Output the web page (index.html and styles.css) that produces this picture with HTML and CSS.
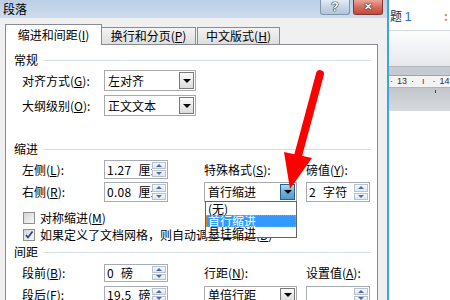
FILE: index.html
```html
<!DOCTYPE html>
<html lang="zh-CN">
<head>
  <meta charset="UTF-8"/>
  <title>段落</title>
  <link rel="stylesheet" href="styles.css">
</head>
<body>

  <div class="screen">
    <div class="dialog">
      <div class="titlebar">
        <span class="title">段落</span>
        <div class="caption-btns">
          <span class="cbtn help">?</span>
          <span class="cbtn close">✕</span>
        </div>
      </div>

      <div class="tabs">
        <div class="tab active">缩进和间距(<u>I</u>)</div>
        <div class="tab">换行和分页(<u>P</u>)</div>
        <div class="tab">中文版式(<u>H</u>)</div>
      </div>

      <div class="panel">
        <div class="group g1">常规</div>
        <div class="row r1">
          <span>对齐方式(<u>G</u>):</span>
          <div class="select wide"><span class="val">左对齐</span><span class="drop"><i></i></span></div>
        </div>
        <div class="row r2">
          <span>大纲级别(<u>O</u>):</span>
          <div class="select wide"><span class="val">正文文本</span><span class="drop"><i></i></span></div>
        </div>

        <div class="group g2">缩进</div>
        <div class="row r3">
          <span>左侧(<u>L</u>):</span>
          <div class="spin"><span class="val">1.27 厘米</span><span class="arrows"><b class="up"></b><b class="down"></b></span></div>
          <span>特殊格式(<u>S</u>):</span>
          <span>磅值(<u>Y</u>):</span>
        </div>
        <div class="row r4">
          <span>右侧(<u>R</u>):</span>
          <div class="spin"><span class="val">0.08 厘米</span><span class="arrows"><b class="up"></b><b class="down"></b></span></div>
          <div class="select mid"><span class="val">首行缩进</span><span class="drop hot"><i></i></span></div>
          <div class="spin"><span class="val">2 字符</span><span class="arrows"><b class="up"></b><b class="down"></b></span></div>
        </div>

        <label class="check c1"><span class="box"></span><span>对称缩进(<u>M</u>)</span></label>
        <label class="check c2"><span class="box">
          <svg viewBox="0 0 10 10"><path d="M2 5 L4 7.5 L8.5 1.5" fill="none" stroke="#2a3a8c" stroke-width="1.6"/></svg>
        </span><span>如果定义了文档网格，则自动调整右缩进(<u>D</u>)</span></label>

        <div class="group g3">间距</div>
        <div class="row r5">
          <span>段前(<u>B</u>):</span>
          <div class="spin"><span class="val">0 磅</span><span class="arrows"><b class="up"></b><b class="down"></b></span></div>
          <span>行距(<u>N</u>):</span>
          <span>设置值(<u>A</u>):</span>
        </div>
        <div class="row r6">
          <span>段后(<u>F</u>):</span>
          <div class="spin"><span class="val">19.5 磅</span><span class="arrows"><b class="up"></b><b class="down"></b></span></div>
          <div class="select mid"><span class="val">单倍行距</span><span class="drop"><i></i></span></div>
          <div class="spin"><span class="val"></span><span class="arrows"><b class="up"></b><b class="down"></b></span></div>
        </div>
      </div>
    </div>

    <div class="word">
      <div class="styles-row"><span class="style-name">题 <span class="num">1</span></span><span class="orange">:</span></div>
      <div class="ribbon-fade"></div>
      <div class="ribbon-band"></div>
      <div class="ruler">
        <span>·</span><span>13</span><span>·</span><span>ı</span><span>·</span><span>14</span><span>·</span>
      </div>
      <div class="ruler-below"><span class="tick"></span></div>
      <div class="page"></div>
    </div>
  </div>

  <!-- open dropdown of 特殊格式 -->
  <ul class="droplist">
    <li>(无)</li>
    <li class="sel">首行缩进</li>
    <li>悬挂缩进</li>
  </ul>

  <!-- red annotation arrow -->
  <svg class="arrow" viewBox="0 0 450 300">
    <line x1="320" y1="74" x2="298" y2="156" stroke="#ff0000" stroke-width="8" stroke-linecap="round"/>
    <polygon points="284,152 312,158 290,189" fill="#ff0000"/>
  </svg>

</body>
</html>
```

FILE: styles.css
```css
*,*::before,*::after { box-sizing:border-box; margin:0; padding:0 }
body {
  width: 450px;
  height: 300px;
  overflow: hidden;
  position: relative;
  background: #fff;
  color: #000;
  font-family: "Noto Sans CJK SC", "Liberation Sans", sans-serif;
  font-size: 12px;
  line-height: 1;
}
u { text-decoration: underline; text-underline-offset: 1px; }

.screen {
  display: flex;
  height: 300px;
}

/* ---- dialog ---- */
.dialog {
  width: 389px;
  background: #f0f0f0;
  border-right: 2px solid #3fa3e3;
  display: flex;
  flex-direction: column;
}
.titlebar {
  height: 18px;
  flex: none;
  background: linear-gradient(#bccfe6, #cddcee);
  display: flex;
  justify-content: space-between;
  align-items: flex-start;
  padding: 0 4px 0 3px;
}
.title { line-height: 18px; }
.caption-btns { display: flex; gap: 3px; }
.cbtn {
  width: 30px; height: 15px;
  border-radius: 0 0 3px 3px;
  display: flex; justify-content: center; align-items: center;
  color: #fff;
  font-family: "Liberation Sans", sans-serif;
  font-weight: 700;
  font-size: 12px;
  text-shadow: 0 0 1px #222, 0 0 1px #222, 0 0 1px #222;
}
.help {
  background: linear-gradient(#e3ebf5, #c6d5e7 50%, #b4c6dc);
  border: 1px solid #8294aa;
  border-top: none;
}
.close {
  background: linear-gradient(#eaa799, #d66a5b 50%, #c0493d);
  border: 1px solid #86362f;
  border-top: none;
  font-size: 10px;
}

.tabs {
  height: 20px;
  margin-top: 6px;
  padding-left: 5px;
  display: flex;
  align-items: flex-end;
  position: relative;
  z-index: 1;
  flex: none;
}
.tab {
  height: 17px;
  border: 1px solid #898c95;
  border-bottom: none;
  background: linear-gradient(#f3f3f3, #dedede);
  display: flex; justify-content: center; align-items: center;
  margin-left: -1px;
}
.tab:nth-child(2) { width: 95px; }
.tab:nth-child(3) { width: 83px; margin-left: 1px; }
.tab.active {
  width: 97px;
  height: 21px;
  margin: 0 0 -1px 0;
  background: #fff;
  padding-bottom: 1px;
}

.panel {
  flex: 1;
  margin-left: 5px;
  width: 373px;
  background: #fff;
  border: 1px solid #898c95;
  padding-left: 8px;
}

.group {
  height: 16px;
  display: flex;
  align-items: center;
  gap: 5px;
  padding-right: 6px;
}
.group::after {
  content: "";
  flex: 1;
  height: 1px;
  background: #d5dfe5;
}
.g1 { margin-top: 7px; }
.g2 { margin-top: 25px; }
.g3 { margin-top: 1px; }

.row {
  display: grid;
  grid-template-columns: 82px 100px 102px 65px;
  align-items: center;
  padding-left: 8px;
}
.r1 { height: 21px; margin-top: 2px; }
.r2 { height: 21px; margin-top: 4px; }
.r3 { height: 19px; margin-top: 3px; }
.r4 { height: 20px; margin-top: 3px; }
.r5 { height: 18px; margin-top: 4px; }
.r6 { height: 18px; margin-top: 4px; }

/* combo box */
.select {
  height: 100%;
  border: 1px solid #a9a9a9;
  background: #fff;
  display: flex;
  align-items: center;
  padding-left: 3px;
}
.select.wide { width: 92px; grid-column: 2 / 4; }
.select.mid { width: 93px; }
.select .val { flex: 1; }
.drop {
  width: 15px;
  height: calc(100% - 2px);
  margin-right: 1px;
  border: 1px solid #7a7a7a;
  background: linear-gradient(#fbfbfb, #dcdcdc);
  display: flex; justify-content: center; align-items: center;
}
.drop i {
  width: 0; height: 0;
  border-left: 4px solid transparent;
  border-right: 4px solid transparent;
  border-top: 4px solid #000;
}
.drop.hot {
  border-color: #2f5f86;
  background: linear-gradient(#b4defa, #6bb0dd 50%, #4f9bd0);
}

/* spin box */
.spin {
  width: 64px;
  height: 100%;
  border: 1px solid #a5acb5;
  background: #fff;
  display: flex;
}
.spin .val {
  flex: 1;
  overflow: hidden;
  white-space: nowrap;
  padding-left: 2px;
  display: flex;
  align-items: center;
  letter-spacing: 0.3px;
  word-spacing: 4px;
}
.arrows {
  width: 15px;
  display: flex;
  flex-direction: column;
  gap: 1px;
  padding: 1px 1px 1px 0;
}
.arrows b {
  flex: 1;
  border: 1px solid #b7c2cf;
  background: linear-gradient(#f6f8fb, #dfe6ee);
  display: flex; justify-content: center; align-items: center;
}
.arrows b::after {
  content: "";
  width: 0; height: 0;
  border-left: 3px solid transparent;
  border-right: 3px solid transparent;
}
.arrows .up::after { border-bottom: 3px solid #4d6bab; }
.arrows .down::after { border-top: 3px solid #4d6bab; }

/* check boxes */
.check {
  height: 16px;
  display: flex;
  align-items: center;
  gap: 5px;
  padding-left: 9px;
  white-space: nowrap;
}
.c1 { margin-top: 8px; }
.c2 { margin-top: 1px; }
.box {
  width: 12px; height: 12px;
  flex: none;
  border: 1px solid #8e8f8f;
  background: linear-gradient(135deg, #d4d4d4, #f8f8f8);
  display: flex; justify-content: center; align-items: center;
}
.box svg { width: 10px; height: 10px; }

/* open list */
.droplist {
  position: absolute;
  left: 205px; top: 201px;
  width: 92px; height: 37px;
  background: #fff;
  border: 1px solid #646464;
  list-style: none;
  padding-top: 1px;
  z-index: 5;
}
.droplist li {
  height: 12px;
  line-height: 12px;
  padding-left: 2px;
}
.droplist li.sel {
  background: #3399ff;
  color: #fff;
  outline: 1px dotted #e8902a;
  outline-offset: -1px;
}

.arrow {
  position: absolute;
  left: 0; top: 0;
  width: 450px; height: 300px;
  pointer-events: none;
  z-index: 10;
}

/* ---- word window strip ---- */
.word {
  flex: 1;
  display: flex;
  flex-direction: column;
  overflow: hidden;
}
.styles-row {
  height: 31px;
  flex: none;
  border-bottom: 1px solid #d6dbe1;
  display: flex;
  justify-content: space-between;
  padding: 10px 2px 0 1px;
  white-space: nowrap;
}
.style-name { color: #1e2a44; }
.num { color: #2a6bc0; font-family: "Liberation Sans", sans-serif; }
.orange { color: #e08a2a; font-weight: 700; }
.ribbon-fade {
  height: 36px;
  flex: none;
  background: linear-gradient(#fdfdfd, #e6e8eb);
  border-bottom: 1px solid #b4b9c0;
}
.ribbon-band {
  height: 8px;
  flex: none;
  background: #c6cbd1;
}
.ruler {
  height: 13px;
  flex: none;
  background: #f3f3f3;
  border-top: 1px solid #9ea4ac;
  border-bottom: 1px solid #b0b5bc;
  display: flex;
  align-items: center;
  gap: 4px;
  font-family: "Liberation Sans", sans-serif;
  font-size: 9px;
  color: #333;
  padding-left: 1px;
}
.ruler span:nth-child(4) { margin: 0 4px; }
.ruler-below {
  height: 23px;
  flex: none;
  background: linear-gradient(#c3c7cd, #d6d9dd);
  padding-left: 46px;
}
.tick {
  display: block;
  width: 1px; height: 3px;
  margin-top: 2px;
  background: #444;
}
.page { flex: 1; background: #fff; }
```
